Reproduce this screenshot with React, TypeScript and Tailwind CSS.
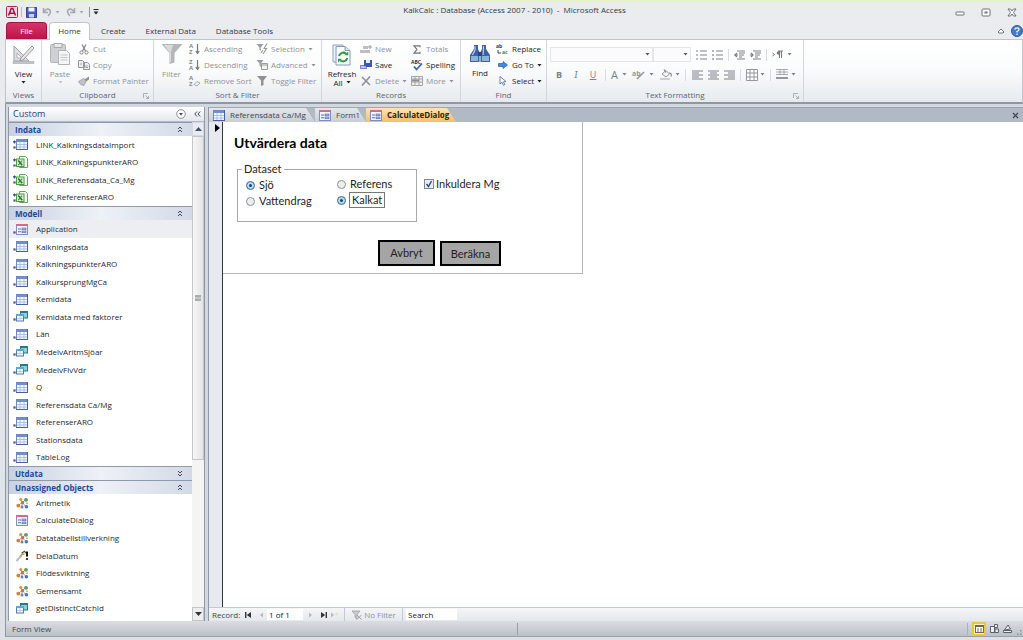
import React, { useState } from 'react';
import { clsx } from 'clsx';

type ObjectKind = 'table' | 'excel' | 'form' | 'query' | 'macro' | 'module';

interface NavItem {
  label: string;
  kind: ObjectKind;
  linked?: boolean;
  shortcut?: boolean;
}

interface NavGroup {
  title: string;
  open: boolean;
  items: NavItem[];
}

const navGroups: NavGroup[] = [
  {
    title: 'Indata',
    open: true,
    items: [
      { label: 'LINK_KalkningsdataImport', kind: 'table', linked: true },
      { label: 'LINK_KalkningspunkterARO', kind: 'excel', linked: true },
      { label: 'LINK_Referensdata_Ca_Mg', kind: 'excel', linked: true },
      { label: 'LINK_ReferenserARO', kind: 'excel', linked: true }
    ]
  },
  {
    title: 'Modell',
    open: true,
    items: [
      { label: 'Application', kind: 'form', shortcut: true },
      { label: 'Kalkningsdata', kind: 'table', shortcut: true },
      { label: 'KalkningspunkterARO', kind: 'table', shortcut: true },
      { label: 'KalkursprungMgCa', kind: 'table', shortcut: true },
      { label: 'Kemidata', kind: 'table', shortcut: true },
      { label: 'Kemidata med faktorer', kind: 'query', shortcut: true },
      { label: 'Län', kind: 'table', shortcut: true },
      { label: 'MedelvAritmSjöar', kind: 'query', shortcut: true },
      { label: 'MedelvFlvVdr', kind: 'query', shortcut: true },
      { label: 'Q', kind: 'table', shortcut: true },
      { label: 'Referensdata Ca/Mg', kind: 'table', shortcut: true },
      { label: 'ReferenserARO', kind: 'table', shortcut: true },
      { label: 'Stationsdata', kind: 'table', shortcut: true },
      { label: 'TableLog', kind: 'table', shortcut: true }
    ]
  },
  { title: 'Utdata', open: false, items: [] },
  {
    title: 'Unassigned Objects',
    open: true,
    items: [
      { label: 'Aritmetik', kind: 'macro' },
      { label: 'CalculateDialog', kind: 'form' },
      { label: 'Datatabellstillverkning', kind: 'macro' },
      { label: 'DelaDatum', kind: 'module' },
      { label: 'Flödesviktning', kind: 'macro' },
      { label: 'Gemensamt', kind: 'macro' },
      { label: 'getDistinctCatchId', kind: 'query' }
    ]
  }
];

/* ---------- object icons ---------- */

function TableIcon() {
  return (
    <svg viewBox="0 0 12 11" className="w-3 h-[11px] shrink-0">
      <rect x="0.5" y="0.5" width="11" height="10" fill="#f4f8ff" stroke="#7088bd" />
      <rect x="1" y="1" width="10" height="2" fill="#6f8fd0" />
      <path d="M1 5.5h10M1 8h10M4 3v7M8 3v7" stroke="#9db3df" strokeWidth="0.8" />
      <path d="M11.5 0v11M0 10.5h12" stroke="#4c5f96" />
    </svg>
  );
}

function ExcelIcon() {
  return (
    <svg viewBox="0 0 12 12" className="w-3 h-3 shrink-0">
      <path d="M3.5 0.5h6l2 2v9h-8z" fill="#f3fbf0" stroke="#62a957" />
      <rect x="0.5" y="3" width="7.5" height="7.5" fill="#dff2d8" stroke="#4d9a42" />
      <path d="M2.2 4.6l4 4.6" stroke="#1d6b1d" strokeWidth="1.5" />
      <path d="M6.2 4.6l-4 4.6" stroke="#379237" strokeWidth="1.2" />
    </svg>
  );
}

function FormIcon() {
  return (
    <svg viewBox="0 0 12 11" className="w-3 h-[11px] shrink-0">
      <rect x="0.5" y="0.5" width="11" height="10" fill="#f2f5fc" stroke="#7d8fc0" />
      <rect x="0" y="0" width="12" height="2" fill="#cf6b90" />
      <path d="M2 5h3M2 7.8h3" stroke="#5a6ea8" strokeWidth="1.1" />
      <rect x="6" y="4" width="4" height="1.8" fill="#a9bdf0" stroke="#3f5396" strokeWidth="0.5" />
      <rect x="6" y="7" width="4" height="1.8" fill="#a9bdf0" stroke="#3f5396" strokeWidth="0.5" />
    </svg>
  );
}

function QueryIcon() {
  return (
    <svg viewBox="0 0 12 11" className="w-3 h-[11px] shrink-0">
      <rect x="4.5" y="0.5" width="7" height="6.5" fill="#8fd0d4" stroke="#247c86" />
      <rect x="4" y="0" width="8" height="2" fill="#247c86" />
      <rect x="0.5" y="3.5" width="7" height="6.5" fill="#f2f8ff" stroke="#5475b4" />
      <rect x="0" y="3" width="8" height="2" fill="#5fa9c4" />
      <path d="M1 7.5h6M4 5v5" stroke="#a9bfe4" strokeWidth="0.7" />
    </svg>
  );
}

function MacroIcon() {
  return (
    <svg viewBox="0 0 13 12" className="w-[13px] h-3 shrink-0">
      <path d="M2.5 8.5L6 5.5l4 4M6 5.5l3.5-2.5M5 2.5L6 5.5M6 9.5V5.5" stroke="#8b8f98" strokeWidth="0.9" fill="none" />
      <circle cx="4.8" cy="2.5" r="1.6" fill="#e2953a" />
      <circle cx="10" cy="2.8" r="1.9" fill="#5c9a64" />
      <circle cx="6.6" cy="5.6" r="1.6" fill="#d9673b" />
      <circle cx="2.3" cy="8.6" r="1.9" fill="#cf8331" />
      <circle cx="6" cy="10" r="1.5" fill="#5d86c9" />
      <circle cx="10.4" cy="9.8" r="1.8" fill="#4673c0" />
      <circle cx="11" cy="6.3" r="1.1" fill="#e3b24d" />
    </svg>
  );
}

function ModuleIcon() {
  return (
    <svg viewBox="0 0 13 12" className="w-[13px] h-3 shrink-0">
      <path d="M0.5 11L6 5" stroke="#b9bec7" strokeWidth="2" />
      <path d="M4 6.5L6.5 4l2 .3" stroke="#c9a03a" strokeWidth="1.4" fill="none" />
      <path d="M5.5 3.2l3-2 1.5 2" stroke="#4c4f57" strokeWidth="1.2" fill="none" />
      <path d="M11 1.5v5" stroke="#111" strokeWidth="2" />
      <circle cx="11" cy="9" r="1.1" fill="#111" />
    </svg>
  );
}

function ObjectIcon({ kind }: { kind: ObjectKind }) {
  if (kind === 'table') return <TableIcon />;
  if (kind === 'excel') return <ExcelIcon />;
  if (kind === 'form') return <FormIcon />;
  if (kind === 'query') return <QueryIcon />;
  if (kind === 'macro') return <MacroIcon />;
  return <ModuleIcon />;
}

/* ---------- small ribbon pieces ---------- */

function Caret({ className }: { className?: string }) {
  return (
    <svg viewBox="0 0 5 3" className={clsx('w-[5px] h-[3px] shrink-0', className)}>
      <path d="M0.5 0h4L2.5 2.6z" fill="currentColor" />
    </svg>
  );
}

function Launcher() {
  return (
    <svg viewBox="0 0 6 6" className="w-1.5 h-1.5 absolute right-1 bottom-[3px]">
      <path d="M0.5 5V0.5H5M2.5 2.5l3 3M5.5 3v2.5H3" fill="none" stroke="#9aa0aa" strokeWidth="0.8" />
    </svg>
  );
}

interface GroupProps {
  label: string;
  launcher?: boolean;
  className: string;
  children: React.ReactNode;
}

function RibbonGroup({ label, launcher, className, children }: GroupProps) {
  return (
    <section
      aria-label={label}
      className={clsx('relative shrink-0 flex flex-col border-r border-[#d3d7dd]', className)}
    >
      <div className="flex-1 flex">{children}</div>
      <div className="h-[13px] text-center text-[#5d6470] leading-[12px]">{label}</div>
      {launcher && <Launcher />}
    </section>
  );
}

interface CommandProps {
  icon: React.ReactNode;
  label: string;
  enabled?: boolean;
  menu?: boolean;
}

function Command({ icon, label, enabled, menu }: CommandProps) {
  return (
    <button
      className={clsx(
        'h-4 flex items-center gap-[3px] whitespace-nowrap',
        enabled ? 'text-[#1e2228]' : 'text-[#8f9399]'
      )}
    >
      <span className="w-3 flex justify-center">{icon}</span>
      <span>{label}</span>
      {menu && <Caret />}
    </button>
  );
}

function SortIcon({ top, bottom, eraser }: { top: string; bottom: string; eraser?: boolean }) {
  return (
    <svg viewBox="0 0 12 12" className="w-3 h-3 overflow-visible">
      <text x="0" y="5" fontSize="6" fontWeight="bold" fill="#888">{top}</text>
      <text x="0" y="11" fontSize="6" fontWeight="bold" fill="#888">{bottom}</text>
      {eraser ? (
        <path d="M5 9.5l3-3 3 1.5-3 3z" fill="#eee" stroke="#999" strokeWidth="0.8" />
      ) : (
        <path d="M8.5 1v9M6.8 8l1.7 2.5L10.2 8" fill="none" stroke="#777" strokeWidth="1.2" />
      )}
    </svg>
  );
}

function FunnelIcon({ mark }: { mark: 'bolt' | 'sheet' | 'none' }) {
  return (
    <svg viewBox="0 0 12 12" className="w-3 h-3">
      {mark === 'none' ? (
        <path d="M1 1h10L7.5 5.5V10L5 11V5.5z" fill="#8f9297" />
      ) : (
        <path d="M0.5 1h7L4.8 4.5V8L3.5 7V4.5z" fill="#999da2" />
      )}
      {mark === 'bolt' && <path d="M11 0.5L8 5.5h2.5L7 11M5 10l2-3" fill="none" stroke="#999" strokeWidth="1.1" />}
      {mark === 'sheet' && <path d="M5.5 4.5h6v6h-6zM5.5 6h6" fill="#f4f4f4" stroke="#999" />}
    </svg>
  );
}

function Records() {
  return (
    <RibbonGroup label="Records" className="w-[139px]">
      <button className="w-9 ml-0.5 pt-[3px] flex flex-col items-center text-[#1e2228]">
        <svg viewBox="0 0 22 24" className="w-[22px] h-6">
          <path d="M2 2h10v17H2z" fill="#eef3fa" stroke="#8ea3c4" />
          <path d="M5 3.5h9l5 4V22H5z" fill="#fbfdff" stroke="#8498bb" />
          <path d="M14 3.5v4h5" fill="#dbe6f4" stroke="#8498bb" />
          <path d="M8 13a4.2 4.2 0 0 1 7-2.2" fill="none" stroke="#2f9c3c" strokeWidth="2" />
          <path d="M13.5 12.2h3.8V8.4z" fill="#2f9c3c" />
          <path d="M16.3 15a4.2 4.2 0 0 1-7 2.2" fill="none" stroke="#2f9c3c" strokeWidth="2" />
          <path d="M10.8 15.8H7v3.8z" fill="#2f9c3c" />
        </svg>
        <span className="leading-[9px] mt-0.5">Refresh</span>
        <span className="leading-[9px] flex items-center gap-[3px]">All <Caret /></span>
      </button>
      <div className="flex flex-col pt-px w-[51px]">
        <Command
          label="New"
          icon={
            <svg viewBox="0 0 12 9" className="w-3 h-[9px]">
              <path d="M3 1h5v3H3zM0 5h10v3H0z" fill="#bcbfc4" />
              <path d="M10 0v4M8 2h4" stroke="#999" />
            </svg>
          }
        />
        <Command
          enabled
          label="Save"
          icon={
            <svg viewBox="0 0 12 10" className="w-3 h-2.5">
              <path d="M0 5h7v4H0z" fill="#7c87c8" />
              <path d="M4 0h8v7H4z" fill="#3f56ad" />
              <path d="M6 0h4v3H6z" fill="#e8edfb" />
              <path d="M1 7h5" stroke="#fff" />
            </svg>
          }
        />
        <Command
          menu
          label="Delete"
          icon={
            <svg viewBox="0 0 10 10" className="w-2.5 h-2.5">
              <path d="M1 1l8 8M9 0.5L1 9.5" stroke="#8d9096" strokeWidth="1.6" />
            </svg>
          }
        />
      </div>
      <div className="flex flex-col pt-px">
        <Command
          label="Totals"
          icon={
            <svg viewBox="0 0 8 9" className="w-2 h-[9px]">
              <path d="M7 2.2V0.8H1l3 3.7-3 3.7h6V6.8" fill="none" stroke="#6f7379" strokeWidth="1.2" />
            </svg>
          }
        />
        <Command
          enabled
          label="Spelling"
          icon={
            <svg viewBox="0 0 12 11" className="w-3 h-[11px] overflow-visible">
              <text x="0" y="4" fontSize="5" fontWeight="bold" fill="#333">ABC</text>
              <path d="M3 6.5l2.5 3L11 3.5" fill="none" stroke="#3563b8" strokeWidth="1.8" />
            </svg>
          }
        />
        <Command
          menu
          label="More"
          icon={
            <svg viewBox="0 0 12 10" className="w-3 h-2.5">
              <path d="M0.5 0.5h11v9H0.5zM0.5 3h11M0.5 6h11M4 0.5v9M8 0.5v9" fill="#efefef" stroke="#a3a6aa" />
              <path d="M1 3.5h7v2H1z" fill="#8d9095" />
            </svg>
          }
        />
      </div>
    </RibbonGroup>
  );
}

function FindGroup() {
  return (
    <RibbonGroup label="Find" className="w-[86px]">
      <button className="w-9 ml-px pt-1 flex flex-col items-center text-[#1e2228]">
        <svg viewBox="0 0 22 20" className="w-[22px] h-5">
          <path d="M5 1h4v4l1.5 3v10H1v-7L5 5z" fill="#3f62a0" />
          <path d="M13 1h4v4l4 6v7h-9.5V8L13 5z" fill="#3f62a0" />
          <path d="M9 8h4v4H9z" fill="#2b4678" />
          <path d="M2 12h7v5H2zM13 12h7v5h-7z" fill="#8fb1e0" />
          <path d="M6 2v4L3.5 11M14.5 2v4L14 11" stroke="#b4cdf0" fill="none" strokeWidth="1.2" />
        </svg>
        <span className="leading-[10px] mt-1">Find</span>
      </button>
      <div className="flex flex-col pt-px -ml-px">
        <Command
          enabled
          label="Replace"
          icon={
            <svg viewBox="0 0 12 11" className="w-3 h-[11px] overflow-visible">
              <text x="-1" y="4" fontSize="5" fontWeight="bold" fill="#333">ab</text>
              <text x="5" y="10" fontSize="5" fontWeight="bold" fill="#2e8a3a">ac</text>
              <path d="M1 6v3h3" fill="none" stroke="#333" strokeWidth="0.9" />
            </svg>
          }
        />
        <Command
          enabled
          menu
          label="Go To"
          icon={
            <svg viewBox="0 0 10 8" className="w-2.5 h-2">
              <path d="M0.5 2.5h4.5V0.5L9.5 4 5 7.5v-2H0.5z" fill="#4b87dc" stroke="#2a5cab" strokeWidth="0.7" />
            </svg>
          }
        />
        <Command
          enabled
          menu
          label="Select"
          icon={
            <svg viewBox="0 0 8 10" className="w-2 h-2.5">
              <path d="M1 0.5v7.5l2-1.7 1.5 3 1.3-.7-1.4-2.8L7 5.5z" fill="#fff" stroke="#5c76a8" strokeWidth="0.9" />
            </svg>
          }
        />
      </div>
    </RibbonGroup>
  );
}

function Divider() {
  return <span className="w-px h-3 bg-[#d9dce0] shrink-0" />;
}

function Lines({ rows }: { rows: string }) {
  return (
    <svg viewBox="0 0 11 10" className="w-[11px] h-2.5 shrink-0">
      <path d={rows} stroke="#7d8187" strokeWidth="1.2" fill="none" />
    </svg>
  );
}

function TextFormatting() {
  return (
    <RibbonGroup label="Text Formatting" launcher className="w-[257px]">
      <div className="flex-1 flex flex-col pl-[3px] pt-[7px] text-[#7d8187]">
        <div className="flex items-center h-[15px]">
          <select aria-label="Font" className="w-[103px] h-[15px] border border-[#e4e6e9] bg-[#fbfbfc] appearance-none" />
          <Caret className="-ml-2 text-[#555]" />
          <select aria-label="Font size" className="w-[38px] h-[15px] ml-[3px] border border-[#e4e6e9] bg-[#fbfbfc] appearance-none" />
          <Caret className="-ml-2 text-[#555]" />
          <div className="flex items-center gap-[5px] ml-2">
            <button aria-label="Bullets"><Lines rows="M0 1h2M4 1h7M0 5h2M4 5h7M0 9h2M4 9h7" /></button>
            <button aria-label="Numbering"><Lines rows="M1 0v2M4 1h7M1 4v2M4 5h7M1 8v2M4 9h7" /></button>
            <Divider />
            <button aria-label="Decrease indent"><Lines rows="M3 1h8M5 3h6M5 5h5M5 7h3M3 9h8M3 3L1 5l2 2M0 5h4" /></button>
            <button aria-label="Increase indent"><Lines rows="M3 1h8M5 3h6M5 5h5M5 7h3M3 9h8M1 3l2 2-2 2M0 5h3" /></button>
            <Divider />
            <button aria-label="Text direction" className="flex items-center gap-1">
              <svg viewBox="0 0 11 9" className="w-[11px] h-[9px]">
                <path d="M0.5 3l2 1.5-2 1.5" fill="none" stroke="#777" />
                <path d="M7.5 1v7M9.5 1v7M6 1h5" stroke="#777" fill="none" />
                <circle cx="6.5" cy="3" r="1.8" fill="#777" />
              </svg>
              <Caret />
            </button>
          </div>
        </div>
        <div className="flex items-center h-[17px] mt-1 pl-[5px]">
          <div className="flex items-center gap-[10px]">
            <button className="font-bold text-[9px] w-2">B</button>
            <button className="italic font-serif text-[10px] w-1.5">I</button>
            <button className="underline text-[9px] w-2">U</button>
          </div>
          <div className="flex items-center gap-[5px] ml-2">
            <Divider />
            <button aria-label="Font color" className="flex items-center gap-1 text-[11px]">A <Caret /></button>
            <button aria-label="Highlight" className="flex items-center gap-1">
              <svg viewBox="0 0 13 10" className="w-[13px] h-2.5 overflow-visible">
                <text x="0" y="6" fontSize="7" fontWeight="bold" fill="#999">ab</text>
                <path d="M5 9l7-7" stroke="#999" strokeWidth="1.6" />
              </svg>
              <Caret />
            </button>
            <button aria-label="Background color" className="flex items-center gap-[3px] ml-px">
              <svg viewBox="0 0 12 11" className="w-3 h-[11px]">
                <path d="M2 5l4-3.5L9.5 5 6 8z" fill="#f4f4f4" stroke="#999" />
                <path d="M9 4q3 0 2 3.5M4 0.5l2 3" fill="none" stroke="#888" strokeWidth="1.2" />
                <path d="M0 10h10" stroke="#cfcfcf" strokeWidth="2" />
              </svg>
              <Caret />
            </button>
            <Divider />
          </div>
          <div className="flex items-center gap-[5px] ml-1.5">
            <button aria-label="Align left"><Lines rows="M0 1h11M0 3h7M0 5h11M0 7h7M0 9h11" /></button>
            <button aria-label="Center"><Lines rows="M0 1h11M2 3h7M0 5h11M2 7h7M0 9h11" /></button>
            <button aria-label="Align right"><Lines rows="M0 1h11M4 3h7M0 5h11M4 7h7M0 9h11" /></button>
            <Divider />
            <button aria-label="Gridlines" className="flex items-center gap-0.5">
              <svg viewBox="0 0 12 12" className="w-3 h-3">
                <path d="M0.5 0.5h11v11h-11zM4 0.5v11M8 0.5v11M0.5 4h11M0.5 8h11" fill="#fff" stroke="#94979c" />
              </svg>
              <Caret />
            </button>
            <Divider />
            <button aria-label="Alternate row color" className="flex items-center gap-[3px]">
              <svg viewBox="0 0 12 11" className="w-3 h-[11px]">
                <path d="M0 0.5h12M0 3h12M0 5.5h12M4 0v6M8 0v6" stroke="#94979c" strokeWidth="0.8" />
                <path d="M0 9h12" stroke="#94979c" strokeWidth="2" />
              </svg>
              <Caret />
            </button>
          </div>
        </div>
      </div>
    </RibbonGroup>
  );
}

function Ribbon() {
  return (
    <div className="h-[65px] shrink-0 flex border-t border-x border-b-2 border-t-[#c0c5cc] border-x-[#c0c5cc] border-b-[#8e97a5] bg-gradient-to-b from-white via-[#fafbfc] to-[#e6eaee]">
      <RibbonGroup label="Views" className="w-9">
        <button className="w-full pt-[3px] flex flex-col items-center text-[#1e2228]">
          <svg viewBox="0 0 24 22" className="w-6 h-[22px]">
            <path d="M2 3v15h15z" fill="#dcdee1" stroke="#9fa3a9" />
            <path d="M5 10v5h5z" fill="#fff" stroke="#adb0b5" />
            <path d="M9 15L20 3l2 2-11 12-3 1z" fill="#e8e8e8" stroke="#94979c" />
            <path d="M1 18.5h21v2H1z" fill="#c2c5c9" stroke="#a5a8ad" strokeWidth="0.6" />
          </svg>
          <span className="leading-[10px] mt-1">View</span>
          <Caret className="mt-0.5" />
        </button>
      </RibbonGroup>

      <RibbonGroup label="Clipboard" launcher className="w-28">
        <button className="w-9 pt-0.5 flex flex-col items-center text-[#8f9399]">
          <svg viewBox="0 0 22 23" className="w-[22px] h-[23px]">
            <rect x="1.5" y="2.5" width="15" height="18" rx="1" fill="#cfd0d3" stroke="#b2b4b8" />
            <path d="M5 1.5h8v4H5z" fill="#e9e9ea" stroke="#a6a8ac" />
            <path d="M9.5 8.5h8l3 3v11h-11z" fill="#f5f5f6" stroke="#b2b4b8" />
            <path d="M11.5 13h7M11.5 15.5h7M11.5 18h7" stroke="#c5c6c9" />
          </svg>
          <span className="leading-[10px] mt-1">Paste</span>
          <Caret className="mt-0.5 text-[#c0c2c6]" />
        </button>
        <div className="flex flex-col pt-px">
          <Command
            label="Cut"
            icon={
              <svg viewBox="0 0 10 11" className="w-2.5 h-[11px]">
                <path d="M3 0.5l3.5 6.5M7 0.5L3.5 7" stroke="#85888d" strokeWidth="1.3" />
                <circle cx="2.5" cy="8.5" r="1.6" fill="none" stroke="#85888d" />
                <circle cx="7.5" cy="8.5" r="1.6" fill="none" stroke="#85888d" />
              </svg>
            }
          />
          <Command
            label="Copy"
            icon={
              <svg viewBox="0 0 12 10" className="w-3 h-2.5">
                <path d="M0.5 0.5h4l2 2v5h-6zM5.5 2.5h4l2 2v5h-6z" fill="#ededee" stroke="#96999e" />
                <path d="M7 6h3M7 7.5h3M2 4h2" stroke="#96999e" strokeWidth="0.8" />
              </svg>
            }
          />
          <Command
            label="Format Painter"
            icon={
              <svg viewBox="0 0 12 10" className="w-3 h-2.5">
                <path d="M0.5 5.5l5-3 3 2-2.5 5q-4 0-5.5-4z" fill="#bfc1c5" stroke="#96999e" strokeWidth="0.7" />
                <path d="M6.5 3.5L11 0.5v3L8 5.5" fill="#8c8f94" />
              </svg>
            }
          />
        </div>
      </RibbonGroup>

      <RibbonGroup label="Sort & Filter" className="w-[168px]">
        <button className="w-[35px] pt-0.5 flex flex-col items-center text-[#8f9399]">
          <svg viewBox="0 0 22 23" className="w-[22px] h-[23px]">
            <path d="M0.5 2h21L13.5 11v9.5l-5 1.5V11z" fill="#b4b6ba" />
            <path d="M3 3h9l-2 7v10l-1 .5V11z" fill="#d9dadc" />
          </svg>
          <span className="leading-[10px] mt-1">Filter</span>
        </button>
        <div className="flex flex-col pt-px w-[67px]">
          <Command label="Ascending" icon={<SortIcon top="A" bottom="Z" />} />
          <Command label="Descending" icon={<SortIcon top="Z" bottom="A" />} />
          <Command label="Remove Sort" icon={<SortIcon top="A" bottom="Z" eraser />} />
        </div>
        <div className="flex flex-col pt-px">
          <Command menu label="Selection" icon={<FunnelIcon mark="bolt" />} />
          <Command menu label="Advanced" icon={<FunnelIcon mark="sheet" />} />
          <Command label="Toggle Filter" icon={<FunnelIcon mark="none" />} />
        </div>
      </RibbonGroup>

      <Records />
      <FindGroup />
      <TextFormatting />
    </div>
  );
}

/* ---------- window chrome ---------- */

function TitleBar() {
  return (
    <header className="relative h-[22px] shrink-0 flex items-center justify-between border-t-2 border-[#e6f4c4] px-1.5">
      <div className="flex items-center h-full">
        <svg viewBox="0 0 12 12" className="w-3 h-3">
          <rect x="0.5" y="0.5" width="11" height="11" rx="1" fill="#f7dbe4" stroke="#b0244f" />
          <path d="M2.5 9.5L5.2 2.5h1.6l2.7 7M3.8 7.2h4.4" fill="none" stroke="#a3123f" strokeWidth="1.5" />
        </svg>
        <span className="w-px h-2.5 bg-[#b9bec6] mx-[3px]" />
        <button aria-label="Save" className="ml-px">
          <svg viewBox="0 0 11 11" className="w-[11px] h-[11px]">
            <path d="M0.5 0.5h10v10h-10z" fill="#4a5fb8" stroke="#33438c" />
            <path d="M2.5 0.5h6v4h-6z" fill="#f2f6ff" />
            <path d="M3 7h5v3.5H3z" fill="#c8d3f0" />
          </svg>
        </button>
        <button aria-label="Undo" className="flex items-center gap-[3px] ml-[5px] text-[#a5a9b0]">
          <svg viewBox="0 0 10 10" className="w-2.5 h-2.5">
            <path d="M1.5 1v4.5H6M1.8 5Q5 0.5 8 3q1.5 3-2 6" fill="none" stroke="#a5a9b0" strokeWidth="1.6" />
          </svg>
          <Caret />
        </button>
        <button aria-label="Redo" className="flex items-center gap-[3px] ml-1.5 text-[#a5a9b0]">
          <svg viewBox="0 0 10 10" className="w-2.5 h-2.5">
            <path d="M8.5 1v4.5H4M8.2 5Q5 0.5 2 3q-1.5 3 2 6" fill="none" stroke="#a5a9b0" strokeWidth="1.6" />
          </svg>
          <Caret />
        </button>
        <span className="w-px h-2.5 bg-[#8f949c] ml-[5px]" />
        <button aria-label="Customize toolbar" className="ml-[3px]">
          <svg viewBox="0 0 6 6" className="w-1.5 h-1.5">
            <path d="M0.5 0.5h5" stroke="#222" />
            <path d="M0.5 2.5h5L3 5.5z" fill="#222" />
          </svg>
        </button>
      </div>
      <h1 className="absolute inset-x-0 top-0 text-center text-[#33383f] leading-4 pointer-events-none whitespace-pre pl-1.5">
        KalkCalc : Database (Access 2007 - 2010)  -  Microsoft Access
      </h1>
      <div className="flex items-center gap-4">
        <button aria-label="Minimize">
          <svg viewBox="0 0 10 9" className="w-2.5 h-[9px]">
            <rect x="1" y="4" width="8" height="3" rx="0.5" fill="#fff" stroke="#6d727b" />
          </svg>
        </button>
        <button aria-label="Restore">
          <svg viewBox="0 0 10 9" className="w-2.5 h-[9px]">
            <rect x="1" y="1" width="8" height="7" rx="1" fill="#fff" stroke="#6d727b" />
            <rect x="3.5" y="3.5" width="3" height="2" fill="#6d727b" />
          </svg>
        </button>
        <button aria-label="Close">
          <svg viewBox="0 0 10 9" className="w-2.5 h-[9px]">
            <path d="M1 1h2.500L5 3l1.500-2H9L6.500 4.500 9 8H6.500L5 6 3.500 8H1l2.500-3.500z" fill="#fff" stroke="#5d626b" strokeWidth="0.9" />
          </svg>
        </button>
      </div>
    </header>
  );
}

const ribbonTabs = ['Create', 'External Data', 'Database Tools'];

function RibbonTabs() {
  return (
    <nav className="h-[17px] shrink-0 flex items-stretch pl-1.5 text-[#33383f]">
      <button className="w-[41px] pb-px rounded-t-sm border border-b-0 border-[#9c1642] bg-gradient-to-b from-[#d8336a] to-[#bb1146] text-white">File</button>
      <button className="w-[41px] ml-0.5 pb-0.5 rounded-t-sm border border-b-0 border-[#c0c5cc] bg-white -mb-px relative">Home</button>
      <div className="flex items-stretch gap-5 ml-[11px]">
        {ribbonTabs.map((tab) => (
          <button key={tab}>{tab}</button>
        ))}
      </div>
      <div className="ml-auto flex items-center gap-1.5">
        <button aria-label="Minimize the ribbon">
          <svg viewBox="0 0 8 6" className="w-2 h-1.5">
            <path d="M1 4l3-3 3 3-1 1H2z" fill="#fff" stroke="#6d727b" />
          </svg>
        </button>
        <button aria-label="Help">
          <svg viewBox="0 0 12 12" className="w-3 h-3">
            <circle cx="6" cy="6" r="5.5" fill="#3f7bd0" stroke="#2c5ca8" />
            <path d="M4 4.6Q4 2.800 6 2.800t2 1.700Q8 5.500 6 6.500v1" fill="none" stroke="#fff" strokeWidth="1.3" />
            <circle cx="6" cy="9.2" r="0.8" fill="#fff" />
          </svg>
        </button>
      </div>
    </nav>
  );
}

function Chevrons({ up }: { up: boolean }) {
  return (
    <svg viewBox="0 0 6 7" className="w-1.5 h-[7px]">
      <path d={up ? 'M1 3l2-2 2 2M1 6l2-2 2 2' : 'M1 1l2 2 2-2M1 4l2 2 2-2'} fill="none" stroke="#3c4660" />
    </svg>
  );
}

function NavPane() {
  const [selected, setSelected] = useState('Application');

  return (
    <aside className="w-[197px] shrink-0 flex flex-col border-x border-[#8f98a8] bg-white">
      <div className="h-[15px] shrink-0 flex items-center pl-1 pr-[3px] bg-gradient-to-b from-white to-[#e3e7ed] border-b border-[#b3bac6]">
        <h2 className="text-[#24437f] text-[9px]">Custom</h2>
        <button aria-label="Select category" className="ml-auto">
          <svg viewBox="0 0 10 10" className="w-2.5 h-2.5">
            <circle cx="5" cy="5" r="4.3" fill="#fff" stroke="#8b919c" />
            <path d="M3 4h4L5 6.800z" fill="#4a4f59" />
          </svg>
        </button>
        <button aria-label="Close navigation pane" className="ml-2">
          <svg viewBox="0 0 7 6" className="w-[7px] h-1.5">
            <path d="M3 0.5L0.8 3 3 5.5M6.2 0.5L4 3l2.200 2.500" fill="none" stroke="#3c4660" />
          </svg>
        </button>
      </div>
      <div className="flex-1 min-h-0 flex">
        <div className="flex-1 min-w-0 flex flex-col pb-1">
          {navGroups.map((group) => (
            <React.Fragment key={group.title}>
              <button className="h-3.5 shrink-0 flex items-center justify-between pl-1.5 pr-[9px] border-t border-[#8e99ae] bg-gradient-to-r from-[#c9d2e3] via-[#eef1f6] to-[#d3dae7] font-bold text-[#1d4796]">
                {group.title}
                <Chevrons up={group.open} />
              </button>
              {group.items.map((item) => (
                <button
                  key={item.label}
                  onClick={() => setSelected(item.label)}
                  className={clsx(
                    'flex-1 min-h-0 flex items-center text-left text-[#24282e]',
                    item.label === selected && 'bg-[#eceef2]'
                  )}
                >
                  <span className="w-[27px] flex items-center pl-1">
                    <svg viewBox="0 0 4 11" className="w-[3px] h-[11px] shrink-0">
                      {item.linked && <path d="M2 0v4M0 2h4" stroke="#3450a4" strokeWidth="1.6" />}
                      {(item.linked || item.shortcut) && <path d="M0.5 8h3v3h-3z" fill="#54539a" />}
                    </svg>
                    <ObjectIcon kind={item.kind} />
                  </span>
                  {item.label}
                </button>
              ))}
            </React.Fragment>
          ))}
        </div>
        <div className="w-3 flex flex-col bg-[#f4f4f3]">
          <button aria-label="Scroll up" className="h-3.5 flex items-center justify-center bg-[#e8ecf2] border border-[#d5d9df]">
            <svg viewBox="0 0 7 4" className="w-[7px] h-1"><path d="M0 4h7L3.500 0z" fill="#45506a" /></svg>
          </button>
          <div className="h-[324px] flex flex-col items-center justify-center border border-[#c3c5c8] bg-gradient-to-r from-[#f7f7f6] to-[#e3e4e3]">
            <span className="w-1.5 h-1.5 border-y-2 border-[#aaacae] bg-[#c4c6c8]" />
          </div>
          <button aria-label="Scroll down" className="h-3.5 mt-auto flex items-center justify-center bg-[#eceef1] border border-[#c3c5c8]">
            <svg viewBox="0 0 7 4" className="w-[7px] h-1"><path d="M0 0h7L3.500 4z" fill="#333" /></svg>
          </button>
        </div>
      </div>
    </aside>
  );
}

interface DocTabProps {
  label: string;
  kind: ObjectKind;
  active?: boolean;
  className: string;
}

function DocTab({ label, kind, active, className }: DocTabProps) {
  return (
    <button
      role="tab"
      aria-selected={!!active}
      className={clsx(
        'flex items-center gap-[5px] pl-1 whitespace-nowrap [clip-path:polygon(0_0,calc(100%-9px)_0,100%_100%,0_100%)]',
        active
          ? 'bg-gradient-to-b from-[#fde3b4] to-[#f8bd6b] font-bold text-[#2b2410]'
          : 'bg-gradient-to-b from-[#e4e7eb] to-[#c9ced6] text-[#3f454e]',
        className
      )}
    >
      <ObjectIcon kind={kind} />
      {label}
    </button>
  );
}

interface RadioProps {
  name: string;
  label: string;
  checked: boolean;
  focused?: boolean;
  onChange: () => void;
}

function Radio({ name, label, checked, focused, onChange }: RadioProps) {
  return (
    <label className="h-4 flex items-center gap-[3px]">
      <input
        type="radio"
        name={name}
        checked={checked}
        onChange={onChange}
        className="appearance-none w-[9px] h-[9px] rounded-full border border-[#8d9299] bg-[#eceeef] checked:border-[#5d86ad] checked:bg-[#1c4466] checked:shadow-[inset_0_0_0_2px_#b5dcf4]"
      />
      <span className={clsx(focused ? 'px-0.5 border border-[#777] leading-[14px]' : 'px-px')}>{label}</span>
    </label>
  );
}

function CalculateForm() {
  const [water, setWater] = useState('Sjö');
  const [status, setStatus] = useState('Kalkat');
  const [includeMg, setIncludeMg] = useState(true);

  return (
    <form
      onSubmit={(e) => e.preventDefault()}
      className="w-[360px] h-[152px] border-r border-b border-[#b5b5b5] pl-[11px] pt-3 font-['Lato','Open_Sans',sans-serif] text-[11px] text-[#1e1e1e] flex flex-col"
    >
      <h2 className="text-sm leading-[18px] font-bold text-black">Utvärdera data</h2>
      <div className="flex items-start mt-3 pl-[3px]">
        <fieldset className="w-[180px] h-[58px] border border-[#a8a8a8] flex">
          <legend className="ml-1 px-0.5 leading-[10px]">Dataset</legend>
          <div className="flex gap-6 pl-2">
            <div className="w-[67px] flex flex-col pt-[3px]">
              {['Sjö', 'Vattendrag'].map((w) => (
                <Radio key={w} name="water" label={w} checked={water === w} onChange={() => setWater(w)} />
              ))}
            </div>
            <div className="flex flex-col pt-0.5">
              {['Referens', 'Kalkat'].map((s) => (
                <Radio
                  key={s}
                  name="status"
                  label={s}
                  checked={status === s}
                  focused={s === 'Kalkat'}
                  onChange={() => setStatus(s)}
                />
              ))}
            </div>
          </div>
        </fieldset>
        <label className="flex items-center gap-0.5 ml-[7px] mt-3 h-4">
          <span className="relative w-2.5 h-2.5">
            <input
              type="checkbox"
              checked={includeMg}
              onChange={(e) => setIncludeMg(e.target.checked)}
              className="appearance-none block w-2.5 h-2.5 border border-[#7d8791] bg-[#e6eef6]"
            />
            {includeMg && (
              <svg viewBox="0 0 10 10" className="absolute inset-0 w-2.5 h-2.5 pointer-events-none">
                <path d="M2.500 5l2 2.500L7.500 2" fill="none" stroke="#2a4a86" strokeWidth="1.4" />
              </svg>
            )}
          </span>
          Inkuldera Mg
        </label>
      </div>
      <div className="flex items-end gap-[5px] mt-[18px] ml-36">
        <button className="w-[57px] h-[26px] border-2 border-black bg-[#a5a5a5]">Avbryt</button>
        <button className="w-[61px] h-[25px] border-2 border-black bg-[#a5a5a5]">Beräkna</button>
      </div>
    </form>
  );
}

function RecordBar() {
  return (
    <div className="h-3.5 shrink-0 flex items-center border-t border-[#c5cad2] bg-gradient-to-b from-[#f4f6f8] to-[#e4e8ec] pl-[3px] text-[#3f454e]">
      <span className="w-[33px]">Record:</span>
      <button aria-label="First record">
        <svg viewBox="0 0 6 6" className="w-1.5 h-1.5"><path d="M0 0h1.400v6H0zM6 0v6L1.800 3z" fill="#333" /></svg>
      </button>
      <button aria-label="Previous record" className="ml-2">
        <svg viewBox="0 0 4 6" className="w-1 h-1.5"><path d="M4 0.5v5L1 3z" fill="#b5b9c0" /></svg>
      </button>
      <input aria-label="Current record" defaultValue="1 of 1" className="w-9 h-[11px] ml-1 pl-0.5 bg-white text-[#222]" />
      <button aria-label="Next record" className="ml-1.5">
        <svg viewBox="0 0 4 6" className="w-1 h-1.5"><path d="M0 0.5v5L3 3z" fill="#b5b9c0" /></svg>
      </button>
      <button aria-label="Last record" className="ml-2">
        <svg viewBox="0 0 6 6" className="w-1.5 h-1.5"><path d="M4.600 0H6v6H4.600zM0 0v6l4.200-3z" fill="#333" /></svg>
      </button>
      <button aria-label="New record" className="ml-1">
        <svg viewBox="0 0 7 6" className="w-[7px] h-1.5"><path d="M0 0.5v5L3 3z" fill="#b5b9c0" /><circle cx="5.5" cy="2" r="1.2" fill="#e9dfb0" /></svg>
      </button>
      <span className="w-px h-full bg-[#c5cad2] ml-1.5" />
      <button className="w-[57px] flex items-center justify-center gap-0.5 text-[#8f9399] whitespace-nowrap">
        <svg viewBox="0 0 11 10" className="w-[11px] h-2.5">
          <path d="M1 1h8L6 4.500V9L4 7.500v-3z" fill="#c9ccd0" stroke="#9b9fa5" strokeWidth="0.8" />
          <path d="M6 5l4.500 4.500M10.500 5L6 9.500" stroke="#9b9fa5" />
        </svg>
        No Filter
      </button>
      <span className="w-px h-full bg-[#c5cad2]" />
      <input aria-label="Search" defaultValue="Search" className="w-[51px] h-[11px] ml-[3px] pl-0.5 bg-white text-[#222]" />
    </div>
  );
}

function StatusBar() {
  return (
    <footer className="h-4 shrink-0 flex items-center pl-1.5 pr-px text-[#3f454e] bg-gradient-to-b from-[#dadde2] to-[#bcc1c8] border-b border-[#9ba1ab]">
      <span className="flex-1">Form View</span>
      <span className="w-px h-3 bg-[#999fa9]" />
      <div className="flex-1 flex items-center justify-end gap-1">
        <span className="w-px h-3 bg-[#aab0b9]" />
        <button aria-label="Form View" className="w-3.5 h-3.5 flex items-center justify-center border-2 border-[#e8c93a] bg-[#fdf3b8]">
          <svg viewBox="0 0 9 8" className="w-[9px] h-2">
            <rect x="0.5" y="0.5" width="8" height="7" fill="#fff" stroke="#6c6a55" />
            <path d="M0.5 1.500h8M2 4h2M2 6h2M5 4h2M5 6h2" stroke="#6c6a55" />
          </svg>
        </button>
        <button aria-label="Layout View">
          <svg viewBox="0 0 9 9" className="w-[9px] h-[9px]">
            <path d="M0.5 2.500h4v6h-4zM4.500 0.500h3v3h-3zM5 5h3.500v3.500H5z" fill="#eee" stroke="#5a5f68" />
          </svg>
        </button>
        <button aria-label="Design View">
          <svg viewBox="0 0 9 9" className="w-[9px] h-[9px]">
            <path d="M0.5 8.500h8v-2h-8zM1.500 6L5 1l2.500 4z" fill="#eee" stroke="#5a5f68" />
          </svg>
        </button>
        <svg viewBox="0 0 6 6" className="w-1.5 h-1.5 self-end">
          <path d="M4 0h1.500v1.500H4zM4 3.500h1.500V5H4zM1 3.500h1.500V5H1z" fill="#8d939d" />
        </svg>
      </div>
    </footer>
  );
}

export default function App() {
  return (
    <div className="h-screen flex flex-col overflow-hidden bg-gradient-to-b from-[#eaecf0] to-[#dde1e6] font-['Open_Sans','Noto_Sans',sans-serif] text-[8px] leading-[12px]">
      <TitleBar />
      <RibbonTabs />
      <div className="flex-1 min-h-0 flex flex-col pl-[5px] pb-[3px]">
        <Ribbon />
        <div className="flex-1 min-h-0 flex flex-col border-l border-[#8e97a5]">
          <div className="flex-1 min-h-0 flex gap-[3px] pt-[3px] pl-0.5 bg-[#d3d8df]">
            <NavPane />
            <main className="flex-1 min-w-0 flex flex-col border-l border-[#8f98a8]">
              <div role="tablist" className="h-[15px] shrink-0 flex bg-[#b1b9c4] border-t border-[#9fa8b5]">
                <DocTab label="Referensdata Ca/Mg" kind="table" className="w-[106px]" />
                <DocTab label="Form1" kind="form" className="w-[51px]" />
                <DocTab label="CalculateDialog" kind="form" active className="w-[90px]" />
                <button aria-label="Close document" className="ml-auto mr-1">
                  <svg viewBox="0 0 7 7" className="w-[7px] h-[7px]">
                    <path d="M1 1l5 5M6 1L1 6" stroke="#3c424c" strokeWidth="1.2" />
                  </svg>
                </button>
              </div>
              <div className="flex-1 min-h-0 flex bg-white">
                <div className="w-3.5 shrink-0 bg-[#e6eaef] border-r border-[#33373e] pl-1.5 pt-0.5">
                  <svg viewBox="0 0 5 8" className="w-[5px] h-2"><path d="M0 0v8l5-4z" fill="#000" /></svg>
                </div>
                <CalculateForm />
              </div>
              <RecordBar />
            </main>
          </div>
          <StatusBar />
        </div>
      </div>
    </div>
  );
}
